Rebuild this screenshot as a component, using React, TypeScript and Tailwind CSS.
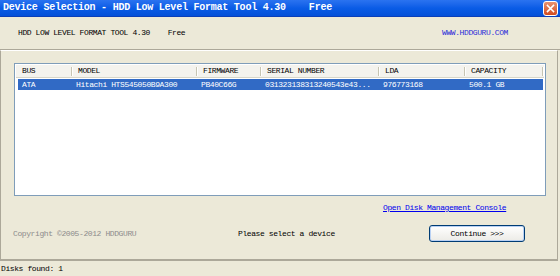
import React from 'react';

const columns = [
  { label: 'BUS', w: 56, value: 'ATA' },
  { label: 'MODEL', w: 125, value: 'Hitachi HTS545050B9A300' },
  { label: 'FIRMWARE', w: 64, value: 'PB40C66G' },
  { label: 'SERIAL NUMBER', w: 118, value: '031323138313240543e43...' },
  { label: 'LDA', w: 86, value: '976773168' },
  { label: 'CAPACITY', w: 78, value: '500.1 GB' },
];

const CloseButton: React.FC = () => (
  <div className="w-[15px] h-[15px] rounded-[3px] border border-white bg-gradient-to-b from-[#e8916f] to-[#d24a1c] flex items-center justify-center">
    <svg width="9" height="9" viewBox="0 0 9 9">
      <path d="M1.5 1.5 L7.5 7.5 M7.5 1.5 L1.5 7.5" stroke="white" strokeWidth="1.6" strokeLinecap="square" />
    </svg>
  </div>
);

const DeviceList: React.FC = () => (
  <div className="w-[532px] h-[133px] border border-[#7f9db9] bg-white">
    <div className="h-full border border-white">
      <div className="flex h-[13px] bg-[#f4f3ee] border-b border-[#d8d6c8]">
        {columns.map((c) => (
          <div key={c.label} style={{ width: c.w }} className="flex items-center justify-between">
            <span className="pl-[6px]">{c.label}</span>
            <span className="w-px h-[9px] bg-[#c7c5b2] shadow-[1px_0_0_#fff]" />
          </div>
        ))}
        <div className="flex-1" />
      </div>
      <div className="flex h-[11px] mt-[1px] ml-[2px] mr-[1px] bg-[#316ac5] text-white items-center">
        {columns.map((c, i) => (
          <div key={c.label} style={{ width: i === 0 ? c.w - 2 : c.w }} className="pl-[4px] whitespace-pre">
            {c.value}
          </div>
        ))}
      </div>
    </div>
  </div>
);

const App: React.FC = () => {
  return (
    <div className="w-[560px] h-[276px] bg-[#ece9d8] flex flex-col overflow-hidden font-['Liberation_Mono',monospace] text-[8px] tracking-[-0.4px] text-black leading-none">
      {/* title bar */}
      <div className="h-[17px] flex items-center justify-between bg-gradient-to-b from-[#2a73f0] via-[#0a5ce6] to-[#0450d8] border-b border-[#0b3fb8] pl-[3px] pr-[2px]">
        <span className="text-white font-bold text-[10px] tracking-[-0.23px] whitespace-pre">
          {'Device Selection - HDD Low Level Format Tool 4.30    Free'}
        </span>
        <CloseButton />
      </div>

      {/* header */}
      <div className="h-[33px] flex items-center pl-[18px] border-b border-[#aca899]">
        <span className="w-[424px] whitespace-pre">{'HDD LOW LEVEL FORMAT TOOL 4.30    Free'}</span>
        <span className="text-[#2b2bd8]">WWW.HDDGURU.COM</span>
      </div>

      {/* body */}
      <div className="h-[211px] border-t border-white border-l border-l-[#aca899] mr-[2px] border-r border-r-[#aca899] border-b-2 border-b-[#aca899] flex flex-col">
        <div className="pl-[13px] pt-[12px]">
          <DeviceList />
        </div>
        <div className="pl-[382px] pt-[8px]">
          <span className="text-[#0000ee] underline">Open Disk Management Console</span>
        </div>
        <div className="flex items-center pl-[12px] pt-[13px]">
          <span className="w-[225px] text-[#8c8c8c]">Copyright ©2005-2012 HDDGURU</span>
          <span className="w-[191px]">Please select a device</span>
          <div className="w-[96px] h-[17px] rounded-[3px] border border-[#003c74] bg-gradient-to-b from-[#ffffff] to-[#ecebe6] shadow-[inset_0_0_0_1px_#b9d1f4] flex items-center justify-center">
            Continue &gt;&gt;&gt;
          </div>
        </div>
      </div>

      {/* status bar */}
      <div className="flex-1 flex items-center pl-[1px]">
        <span>Disks found: 1</span>
      </div>
    </div>
  );
};

export default App;
